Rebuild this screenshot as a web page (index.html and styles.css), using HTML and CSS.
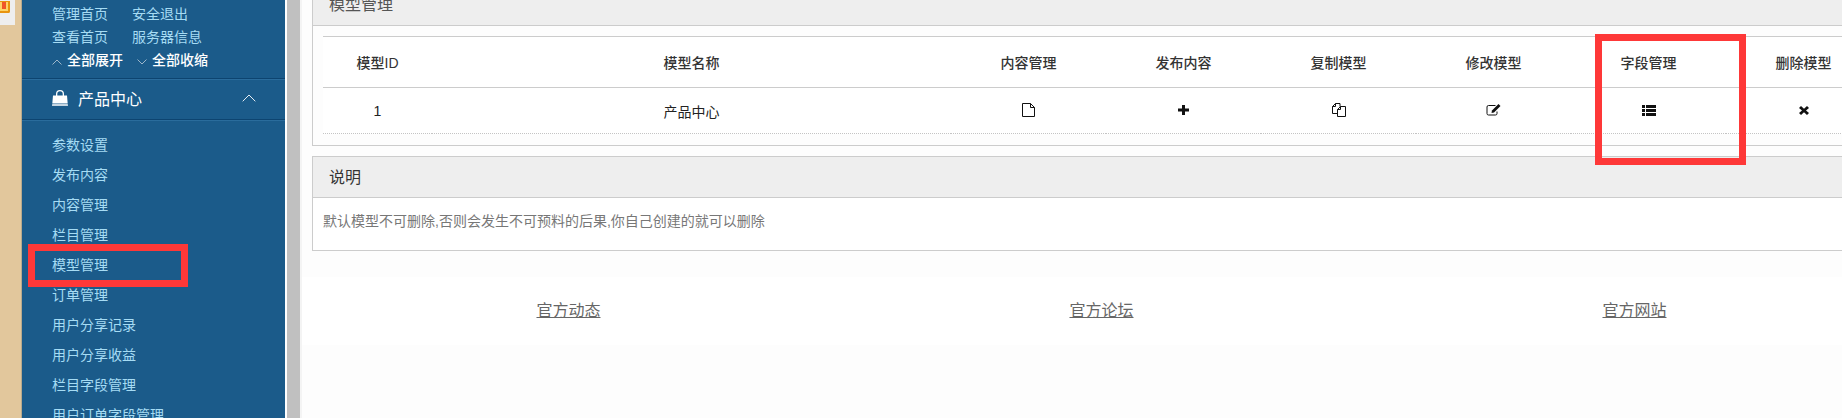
FILE: index.html
```html
<!DOCTYPE html>
<html lang="zh-CN">
<head>
<meta charset="utf-8">
<title>模型管理</title>
<link rel="stylesheet" href="styles.css">
</head>
<body>
<div class="strip">
  <div class="card"><div class="book"><span class="ribbon"></span></div></div>
</div>
<aside class="sidebar">
  <div class="quick">
    <div class="quick-row"><a class="quick-link">管理首页</a><a class="quick-link">安全退出</a></div>
    <div class="quick-row"><a class="quick-link">查看首页</a><a class="quick-link">服务器信息</a></div>
    <div class="toggle-row">
      <svg class="chev-small" viewBox="0 0 10 6"><path d="M.5 5.5 5 1l4.500 4.500" /></svg><span class="toggle-text">全部展开</span>
      <svg class="chev-small chev-gap" viewBox="0 0 10 6"><path d="M.5.5 5 5 9.500.5" /></svg><span class="toggle-text">全部收缩</span>
    </div>
  </div>
  <div class="section">
    <svg class="bag" viewBox="0 0 16 16"><path d="M1 5.500h14l.7 8H.3zM.2 14.300h15.600l.2 1.500H0zM4 5.500V4a4 4 0 0 1 8 0v1.500h-1.300V4a2.700 2.700 0 0 0-5.400 0v1.500z"/></svg>
    <span class="section-title">产品中心</span>
    <svg class="chev-large" viewBox="0 0 14 8"><path d="M.7 7.300 7 1l6.300 6.300"/></svg>
  </div>
  <nav class="menu">
    <a class="menu-item">参数设置</a>
    <a class="menu-item">发布内容</a>
    <a class="menu-item">内容管理</a>
    <a class="menu-item">栏目管理</a>
    <a class="menu-item">模型管理</a>
    <a class="menu-item">订单管理</a>
    <a class="menu-item">用户分享记录</a>
    <a class="menu-item">用户分享收益</a>
    <a class="menu-item">栏目字段管理</a>
    <a class="menu-item">用户订单字段管理</a>
  </nav>
</aside>
<div class="splitter"></div>
<main class="main">
  <section class="panel panel-first">
    <h2 class="panel-head head-muted">模型管理</h2>
    <div class="panel-body-table">
      <table class="grid">
        <colgroup>
          <col class="col-id"><col class="col-name"><col class="col-act"><col class="col-act"><col class="col-act"><col class="col-act"><col class="col-act"><col class="col-act">
        </colgroup>
        <thead>
          <tr><th>模型ID</th><th>模型名称</th><th>内容管理</th><th>发布内容</th><th>复制模型</th><th>修改模型</th><th>字段管理</th><th>删除模型</th></tr>
        </thead>
        <tbody>
          <tr>
            <td>1</td>
            <td>产品中心</td>
            <td><svg class="ico ico-file" viewBox="0 0 13 14"><path d="M.5.5h8l4 4v9H.5zM8.500.5v4h4"/></svg></td>
            <td><svg class="ico ico-plus" viewBox="0 0 11 10"><path class="solid" d="M4 0h3v3.500h4v3H7V10H4V6.500H0v-3h4z"/></svg></td>
            <td><svg class="ico ico-copy" viewBox="0 0 14 14"><path d="M3.500.5H8v3M3.500.5 .5 3.500v7H5M3.500.5v3H.5M8.500 3.500h5v10h-8v-7zM8.500 3.500v3h-3"/></svg></td>
            <td><svg class="ico ico-edit" viewBox="0 0 15 12"><path d="M9.500 1.500H2.500A1.500 1.500 0 0 0 1 3v6.500A1.500 1.500 0 0 0 2.500 11h7A1.500 1.500 0 0 0 11 9.500V7.500"/><path class="solid" d="M12.500 0 14.500 2 8 8.500 5.500 9l.5-2.500z"/></svg></td>
            <td><svg class="ico ico-list" viewBox="0 0 14 11"><path class="solid" d="M0 0h3v3H0zM4 0h10v3H4zM0 4h3v3H0zM4 4h10v3H4zM0 8h3v3H0zM4 8h10v3H4z"/></svg></td>
            <td><svg class="ico ico-times" viewBox="0 0 10 9"><path class="solid" d="M2 0l3 2.700L8 0l2 2-3 2.500L10 7 8 9 5 6.300 2 9 0 7l3-2.500L0 2z"/></svg></td>
          </tr>
        </tbody>
      </table>
    </div>
  </section>
  <section class="panel panel-second">
    <h2 class="panel-head head-low">说明</h2>
    <p class="panel-text">默认模型不可删除,否则会发生不可预料的后果,你自己创建的就可以删除</p>
  </section>
  <footer class="footer">
    <a class="footer-link">官方动态</a>
    <a class="footer-link">官方论坛</a>
    <a class="footer-link">官方网站</a>
  </footer>
</main>
<div class="mark mark-menu"></div>
<div class="mark mark-column"></div>
</body>
</html>
```
FILE: styles.css
```css
* { box-sizing: border-box; }
html, body { margin: 0; height: 418px; overflow: hidden; }
body {
  position: relative;
  display: flex;
  background: #fff;
  font-family: "Liberation Sans", "Noto Sans CJK SC", sans-serif;
  font-size: 14px;
}

/* left strip */
.strip {
  flex: 0 0 22px;
  background: #e2c79c;
  border-right: 1px solid #b8a98c;
}
.card {
  width: 15px;
  height: 25px;
  background: #eeeeee;
  padding-top: 1px;
}
.book {
  width: 10px;
  height: 12px;
  background: #fdd468;
  border: solid #e8940f;
  border-width: 1px 2px 2px 0;
  border-radius: 0 0 2px 0;
}
.ribbon {
  display: block;
  width: 4px;
  height: 7px;
  margin-left: 2px;
  background: #f0562a;
}

/* sidebar */
.sidebar {
  flex: 0 0 263px;
  height: 418px;
  overflow: hidden;
  background: #1b5b8a;
}
.quick { height: 78px; padding: 3px 0 0 30px; }
.quick-row { display: flex; height: 23px; line-height: 23px; }
.quick-link { width: 80px; color: #a6dcf4; white-space: nowrap; }
.toggle-row {
  display: flex;
  align-items: center;
  height: 23px;
  color: #fff;
  line-height: 23px;
}
.toggle-text { font-weight: 500; white-space: nowrap; }
.chev-small {
  width: 10px;
  height: 6px;
  margin: 3px 5px 0 0;
  fill: none;
  stroke: #9db6ca;
  stroke-width: 1;
}
.chev-gap { margin-left: 14px; }
.section {
  display: flex;
  align-items: center;
  height: 42px;
  padding: 0 0 2px 30px;
  border-top: 1px solid #0d4470;
  border-bottom: 1px solid #0d4470;
  box-shadow: inset 0 1px 0 #2a6c9c, 0 1px 0 #2a6c9c;
  color: #fff;
}
.bag { width: 16px; height: 16px; fill: #fff; }
.section-title { margin-left: 10px; font-size: 16px; flex: 1; }
.chev-large {
  width: 14px;
  height: 8px;
  margin-right: 29px;
  fill: none;
  stroke: #e6eef4;
  stroke-width: 1;
}
.menu { display: flex; flex-direction: column; padding: 10px 0 0 30px; }
.menu-item { height: 30px; line-height: 30px; color: #a6dcf4; white-space: nowrap; }

/* splitter */
.splitter {
  flex: 0 0 15px;
  background: #c0c0c0;
  border-left: 2px solid #fff;
}

/* main column */
.main {
  flex: 1;
  min-width: 0;
  height: 418px;
  overflow: hidden;
  background: #fdfdfd;
  border-left: 2px solid #f4f4f4;
}
.panel {
  width: 1600px;
  margin-left: 10px;
  border: 1px solid #cccccc;
}
.panel-first { margin-top: -16px; }
.panel-second { margin-top: 10px; }
.panel-head {
  height: 41px;
  margin: 0;
  padding-left: 16px;
  background: #eeeeee;
  border-bottom: 1px solid #cccccc;
  color: #333;
  font-size: 16px;
  font-weight: 400;
  line-height: 40px;
}
.head-muted { color: #555; }
.head-low { line-height: 42px; }
.panel-body-table { padding: 10px 10px 11px; }
.grid {
  width: 1558px;
  table-layout: fixed;
  border-collapse: separate;
  border-spacing: 0;
  background: #fff;
  font-size: 14px;
}
.col-id { width: 109px; }
.col-name { width: 519px; }
.col-act { width: 155px; }
.grid th {
  height: 52px;
  padding: 0;
  border-top: 1px solid #cccccc;
  border-bottom: 1px solid #cccccc;
  color: #333;
  font-weight: 500;
  text-align: center;
}
.grid td {
  height: 46px;
  padding: 0;
  border-bottom: 1px dotted #c4c4c4;
  color: #222;
  text-align: center;
  vertical-align: middle;
}
.ico {
  display: block;
  margin: -1px auto 0;
  fill: none;
  stroke: #111;
  stroke-width: 1;
}
.ico .solid { fill: #111; stroke: none; }
.ico-file { width: 13px; height: 14px; }
.ico-plus { width: 11px; height: 10px; }
.ico-copy { width: 14px; height: 14px; }
.ico-edit { width: 15px; height: 12px; }
.ico-list { width: 14px; height: 11px; }
.ico-times { width: 10px; height: 9px; }
.panel-text {
  height: 52px;
  margin: 0;
  padding: 13px 0 0 10px;
  background: #fff;
  color: #777;
  font-size: 14px;
  line-height: 20px;
}

/* footer */
.footer {
  display: grid;
  grid-template-columns: repeat(3, 533px);
  height: 68px;
  margin-top: 26px;
  background: #fff;
  text-align: center;
  line-height: 68px;
}
.footer-link { color: #666; font-size: 16px; text-decoration: underline; }

/* annotation boxes */
.mark { position: absolute; border: 7px solid #fe3838; }
.mark-menu { left: 28px; top: 244px; width: 160px; height: 43px; }
.mark-column { left: 1595px; top: 34px; width: 151px; height: 131px; }
```
